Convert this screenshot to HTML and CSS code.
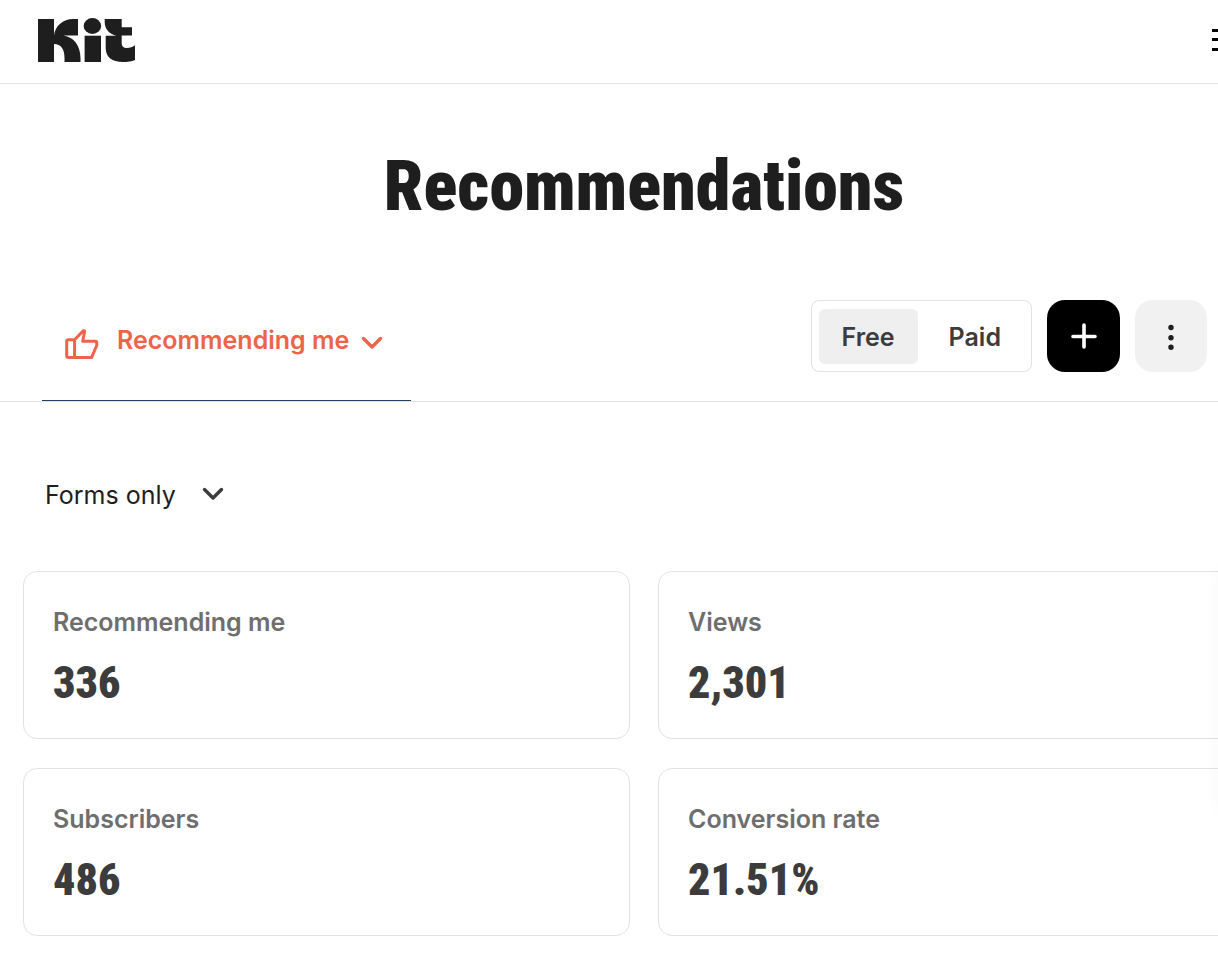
FILE: index.html
```html
<!DOCTYPE html>
<html lang="en">
<head>
<meta charset="UTF-8">
<meta name="viewport" content="width=device-width, initial-scale=1.0">
<title>Recommendations</title>
<link rel="stylesheet" href="styles.css">
</head>
<body>

<div class="page">
  <header class="header">
    <a href="#" class="logo" aria-label="Kit">
      <svg width="97" height="44" viewBox="0 0 97 44" fill="currentColor" aria-hidden="true">
        <path d="M0 1H16V17.5C17 8 25 1 35 1H40V17.5H25.5C36 19 42.5 28 42.5 40V44H26.5V40C26.5 31 23 26 16 26V44H0Z"/>
        <ellipse cx="54.4" cy="8" rx="8.8" ry="7.9"/>
        <path d="M46.6 17.7H63V44H46.6Z"/>
        <path d="M66.7 1H83.7V9.3H94V17.6H83.7V25C83.7 28.5 85.5 30 89 30C92 30 94.5 29 97 27.3V42C94 43.5 89.5 44 85 44C74 44 67.7 39 67.7 30V17.7H78.5C71 16 66.7 11 66.7 4Z"/>
      </svg>
    </a>
    <button class="menu-button" aria-label="Menu">
      <svg width="28" height="24" viewBox="0 0 28 24" aria-hidden="true">
        <path d="M0 1h28v3H0zM0 10h28v3H0zM0 20h28v3H0z"/>
      </svg>
    </button>
  </header>

  <main>
    <h1 class="title">Recommendations</h1>

    <div class="toolbar">
      <button class="tab">
        <svg width="34" height="31" viewBox="0 0 34 31" fill="none" stroke="currentColor" stroke-width="3" stroke-linejoin="round" aria-hidden="true">
          <path d="M9.6 10.8H3.5Q1.7 10.8 1.7 12.6V26.8Q1.7 28.6 3.5 28.6H26.5L31.7 16.5V13.5Q31.7 12.2 30.2 12.2H17.7L19.5 3.5V1.8H18.2L9.6 10.8V28.6"/>
        </svg>
        <span>Recommending me</span>
        <svg class="tab-arrow" width="22" height="14" viewBox="0 0 22 14" fill="none" stroke="currentColor" stroke-width="3.4" stroke-linecap="round" stroke-linejoin="round" aria-hidden="true">
          <path d="M2.5 2.5L11 11L19.5 2.5"/>
        </svg>
      </button>

      <div class="actions">
        <div class="switch">
          <button class="switch-item active" aria-pressed="true">Free</button>
          <button class="switch-item" aria-pressed="false">Paid</button>
        </div>
        <button class="add-button" aria-label="Add">
          <svg width="26" height="26" viewBox="0 0 26 26" fill="none" stroke="currentColor" stroke-width="3.6" stroke-linecap="round" aria-hidden="true">
            <path d="M13 2V24M2 13.5H24"/>
          </svg>
        </button>
        <button class="more-button" aria-label="More">
          <svg width="6" height="28" viewBox="0 0 6 28" fill="currentColor" aria-hidden="true">
            <circle cx="3" cy="5.5" r="2.7"/>
            <circle cx="3" cy="15.8" r="2.7"/>
            <circle cx="3" cy="25.3" r="2.7"/>
          </svg>
        </button>
      </div>
    </div>

    <div class="filter">
      <select class="filter-select" aria-label="Filter">
        <option>Forms only</option>
      </select>
      <svg class="filter-arrow" width="22" height="14" viewBox="0 0 22 14" fill="none" stroke="currentColor" stroke-width="3.4" stroke-linecap="round" stroke-linejoin="round" aria-hidden="true">
        <path d="M2.5 2.5L11 11L19.5 2.5"/>
      </svg>
    </div>

    <div class="stats">
      <section class="card">
        <h2 class="card-label">Recommending me</h2>
        <p class="card-value">336</p>
      </section>
      <section class="card">
        <h2 class="card-label">Views</h2>
        <p class="card-value">2,301</p>
      </section>
      <section class="card">
        <h2 class="card-label">Subscribers</h2>
        <p class="card-value">486</p>
      </section>
      <section class="card">
        <h2 class="card-label">Conversion rate</h2>
        <p class="card-value">21.51%</p>
      </section>
    </div>
  </main>
</div>

<div class="side-panel"></div>

</body>
</html>
```

FILE: styles.css
```css
* {
  box-sizing: border-box;
}

body {
  margin: 0;
  background-color: #fff;
  color: #1e1e1e;
  font-family: Inter, "Liberation Sans", sans-serif;
  font-size: 25px;
  line-height: 32px;
  overflow-x: hidden;
}

button,
select {
  margin: 0;
  padding: 0;
  border: none;
  background: none;
  color: inherit;
  font: inherit;
  cursor: pointer;
}

svg {
  display: block;
}

/* content runs a little past the right edge of the window */
.page {
  margin-right: -70px;
}

.header {
  display: flex;
  align-items: center;
  justify-content: space-between;
  height: 84px;
  padding: 0 48px 4px 38px;
  border-bottom: 1px solid #e2e2e2;
}

.logo {
  color: #1e1e1e;
}

.menu-button {
  color: #000;
}

.title {
  margin: 0;
  padding: 62px 0 74px;
  font-family: "Roboto Condensed", "Liberation Sans", sans-serif;
  font-size: 70px;
  font-weight: 900;
  line-height: 80px;
  text-align: center;
}

.toolbar {
  display: flex;
  justify-content: space-between;
  padding: 0 81px 0 42px;
  border-bottom: 1px solid #e2e2e2;
}

.tab {
  display: flex;
  align-items: center;
  padding: 0 28px 12px 23px;
  border-bottom: 1px solid #1f4260;
  color: #ec6449;
  font-weight: 600;
}

.tab span {
  margin: 0 12px 8px 18px;
}

.tab-arrow {
  margin-bottom: 2px;
}

.actions {
  display: flex;
  gap: 15px;
  padding-bottom: 29px;
}

.switch {
  display: flex;
  gap: 8px;
  padding: 8px 7px 7px;
  border: 1px solid #e2e2e2;
  border-radius: 8px;
}

.switch-item {
  padding: 0 23px;
  border-radius: 6px;
  color: #3c3c3c;
  font-weight: 600;
}

.switch-item.active {
  background-color: #efefef;
}

.add-button,
.more-button {
  display: flex;
  align-items: center;
  justify-content: center;
  height: 72px;
  border-radius: 18px;
}

.add-button {
  width: 73px;
  background-color: #000;
  color: #fff;
}

.more-button {
  width: 72px;
  background-color: #f1f1f1;
}

.filter {
  position: relative;
  width: fit-content;
  margin: 76px 0 60px 45px;
}

.filter-select {
  display: block;
  height: 33px;
  padding-right: 48px;
  appearance: none;
}

.filter-arrow {
  position: absolute;
  top: 9px;
  right: 0;
  color: #3c3c3c;
  pointer-events: none;
}

.stats {
  display: grid;
  grid-template-columns: 1fr 1fr;
  gap: 29px 28px;
  padding: 0 23px 24px;
}

.card {
  padding: 34px 29px 30px;
  border: 1px solid #e2e2e2;
  border-radius: 14px;
}

.card-label {
  margin: 0 0 20px;
  color: #6e6e6e;
  font-size: 25px;
  font-weight: 600;
}

.card-value {
  margin: 0;
  color: #3c3c3c;
  font-family: "Roboto Condensed", "Liberation Sans", sans-serif;
  font-size: 44px;
  font-weight: 900;
  line-height: 50px;
}

/* closed panel, only its shadow shows */
.side-panel {
  position: fixed;
  top: 570px;
  left: 100%;
  width: 40px;
  height: 240px;
  box-shadow: 0 0 20px rgba(0, 0, 0, 0.03);
}
```
